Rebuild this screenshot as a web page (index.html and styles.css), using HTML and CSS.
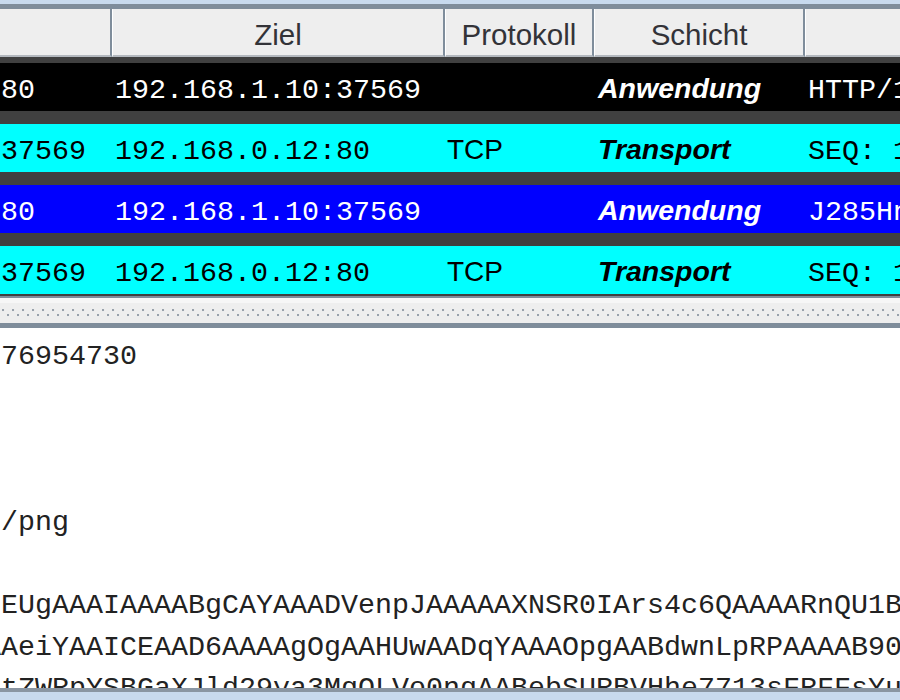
FILE: index.html
```html
<!DOCTYPE html>
<html lang="de">
<head>
<meta charset="utf-8">
<title>Datenaustausch</title>
<link rel="stylesheet" href="styles.css">
</head>
<body>
<div class="window">
  <div class="frame-top"></div>
  <div class="table-pane">
    <div class="table">
      <div class="thead cols">
        <div class="th">Quelle</div>
        <div class="th">Ziel</div>
        <div class="th">Protokoll</div>
        <div class="th">Schicht</div>
        <div class="th">Bemerkungen</div>
      </div>
      <div class="tbody">
        <div class="tr cols row-black">
          <div class="td mono">192.168.0.12:80</div>
          <div class="td mono">192.168.1.10:37569</div>
          <div class="td sans"></div>
          <div class="td layer">Anwendung</div>
          <div class="td mono">HTTP/1.1 200 OK</div>
        </div>
        <div class="tr cols row-cyan">
          <div class="td mono">192.168.1.10:37569</div>
          <div class="td mono">192.168.0.12:80</div>
          <div class="td sans">TCP</div>
          <div class="td layer">Transport</div>
          <div class="td mono">SEQ: 1976954730</div>
        </div>
        <div class="tr cols row-blue">
          <div class="td mono">192.168.0.12:80</div>
          <div class="td mono">192.168.1.10:37569</div>
          <div class="td sans"></div>
          <div class="td layer">Anwendung</div>
          <div class="td mono">J285HnVfX</div>
        </div>
        <div class="tr cols row-cyan">
          <div class="td mono">192.168.1.10:37569</div>
          <div class="td mono">192.168.0.12:80</div>
          <div class="td sans">TCP</div>
          <div class="td layer">Transport</div>
          <div class="td mono">SEQ: 1976955914</div>
        </div>
      </div>
    </div>
  </div>
  <div class="splitter"><div class="grip"></div></div>
  <div class="text-pane">
<pre class="content">Content-Date: 1675976954730



Content-Type: image/png

iVBORw0KGgoAAAANSUhEUgAAAIAAAABgCAYAAADVenpJAAAAAXNSR0IArs4c6QAAAARnQU1BAACx
jwv8YQUAAAAgY0hSTQAAeiYAAICEAAD6AAAAgOgAAHUwAADqYAAAOpgAABdwnLpRPAAAAB90RVh0
U29mdHdhcmUATWFjcm9tZWRpYSBGaXJld29ya3MgOLVo0ngAABebSURBVHhe7713sFRFFsYuZGhk</pre>
  </div>
  <div class="frame-bottom"></div>
</div>
</body>
</html>
```

FILE: styles.css
```css
* {
  box-sizing: border-box;
}

html, body {
  margin: 0;
  padding: 0;
}

body {
  width: 900px;
  height: 700px;
  overflow: hidden;
  background: #c8daee;
  font-family: "Liberation Sans", Arial, sans-serif;
}

.window {
  width: 900px;
  height: 700px;
  display: flex;
  flex-direction: column;
  overflow: hidden;
}

.frame-top {
  flex: none;
  height: 4px;
  background: #c8daee;
}

.table-pane {
  flex: none;
  overflow: hidden;
}

.table {
  width: 1428px;
  margin-left: -223px;
}

.cols {
  display: grid;
  grid-template-columns: 335px 333px 149px 211px 400px;
}

.thead {
  border-top: 5px solid #7f8d9b;
  background: #7f8d9b;
}

.th {
  height: 48px;
  padding-top: 5px;
  line-height: 41px;
  background: #eeeeee;
  border-left: 1px solid #ffffff;
  border-right: 2px solid #7f8d9b;
  border-bottom: 2px solid #b3b8be;
  text-align: center;
  font-size: 29.5px;
  color: #333338;
  white-space: nowrap;
  overflow: hidden;
}

.tbody {
  display: flex;
  flex-direction: column;
  gap: 13px;
  padding: 6px 0 2px;
  background: #404040;
}

.tr {
  height: 48px;
}

.td {
  height: 48px;
  white-space: nowrap;
  overflow: hidden;
}

.mono {
  padding: 7px 0 0 3px;
  line-height: 41px;
  font-family: "Liberation Mono", "Courier New", monospace;
  font-size: 28.33px;
}

.sans {
  padding: 5px 0 0 2px;
  line-height: 41px;
  font-size: 28px;
}

.layer {
  padding: 5px 0 0 4px;
  line-height: 41px;
  font-size: 28.5px;
  font-weight: bold;
  font-style: italic;
}

.row-black {
  background: #000000;
  color: #ffffff;
}

.row-cyan {
  background: #00ffff;
  color: #000000;
}

.row-blue {
  background: #0000ff;
  color: #ffffff;
}

.splitter {
  flex: none;
  height: 32px;
  padding-top: 11px;
  background: #eeeeee;
  border-top: 2px solid #7f8d9b;
  border-bottom: 5px solid #7f8d9b;
  box-shadow: inset 0 5px 0 #f6f6f6;
}

.grip {
  height: 8px;
  background-image:
    radial-gradient(circle at 1px 1px, #98a1ab 1px, transparent 1.6px),
    radial-gradient(circle at 1px 1px, #98a1ab 1px, transparent 1.6px);
  background-size: 10px 10px, 10px 10px;
  background-position: 2px 0, 7px 5px;
  background-repeat: repeat-x;
}

.text-pane {
  flex: none;
  height: 360px;
  background: #ffffff;
  overflow: hidden;
}

.content {
  margin: 0 0 0 -322px;
  padding-top: 8px;
  font-family: "Liberation Mono", "Courier New", monospace;
  font-size: 28.33px;
  line-height: 41.5px;
  color: #222222;
  white-space: pre;
}

.frame-bottom {
  flex: none;
  height: 12px;
  background: #c8daee;
  border-top: 4px solid #8a96a3;
}
```
